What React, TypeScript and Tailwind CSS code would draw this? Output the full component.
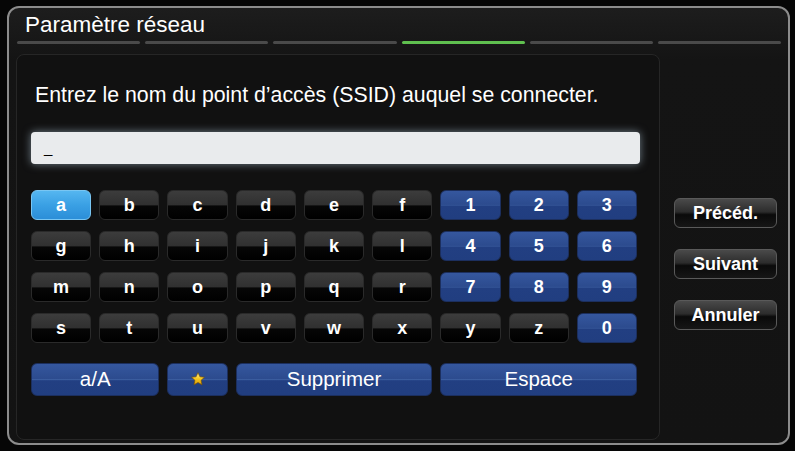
import React from "react";

const rows = [
  ["a", "b", "c", "d", "e", "f", "1", "2", "3"],
  ["g", "h", "i", "j", "k", "l", "4", "5", "6"],
  ["m", "n", "o", "p", "q", "r", "7", "8", "9"],
  ["s", "t", "u", "v", "w", "x", "y", "z", "0"],
];

const darkKey =
  "border border-[#2a2a2a] bg-[linear-gradient(to_bottom,#3c3c3c_0%,#303030_50%,#060606_53%,#000000_100%)]";
const blueKey =
  "border border-[#1c2f5e] bg-[linear-gradient(to_bottom,#35579e_0%,#2c4b8e_48%,#3a5c9e_50%,#223f82_54%,#213e80_100%)]";
const selKey =
  "border border-[#79c6f3] bg-[linear-gradient(to_bottom,#55b6f0_0%,#3aa0e4_50%,#2b8ed8_100%)]";

function Key({ label }: { label: string }) {
  const isDigit = /[0-9]/.test(label);
  const style = label === "a" ? selKey : isDigit ? blueKey : darkKey;
  return (
    <div
      className={`h-[30px] rounded-[6px] flex items-center justify-center text-white text-[18px] font-bold leading-none ${style}`}
    >
      {label}
    </div>
  );
}

function Star() {
  return (
    <svg width="16" height="16" viewBox="0 0 24 24">
      <defs>
        <linearGradient id="sg" x1="0" y1="0" x2="0" y2="1">
          <stop offset="0" stopColor="#fff4a0" />
          <stop offset="0.5" stopColor="#f6c81e" />
          <stop offset="1" stopColor="#d99a08" />
        </linearGradient>
      </defs>
      <path
        d="M12 2.5l2.9 6.2 6.7.7-5 4.6 1.4 6.7L12 17.3l-6 3.4 1.4-6.7-5-4.6 6.7-.7z"
        fill="url(#sg)"
        stroke="#7a5200"
        strokeWidth="1"
        strokeLinejoin="round"
      />
    </svg>
  );
}

function SideButton({ label }: { label: string }) {
  return (
    <div className="w-[103px] h-[30px] rounded-[6px] border border-[#5a5a5a] bg-[linear-gradient(to_bottom,#4a4a4a_0%,#2c2c2c_46%,#0a0a0a_56%,#161616_100%)] flex items-center justify-center text-white text-[18px] font-bold leading-none">
      {label}
    </div>
  );
}

export default function App() {
  const steps = [false, false, false, true, false, false];
  return (
    <div
      className="w-[795px] h-[451px] bg-[#060606] pt-[6px] pl-[7px] overflow-hidden"
      style={{ fontFamily: '"Liberation Sans", Arial, sans-serif' }}
    >
      <div className="w-[783px] h-[439px] rounded-[12px] border-2 border-[#8c8c8c] bg-[linear-gradient(to_bottom,#1d1d1d_0%,#141414_12%,#131313_100%)] flex flex-col">
        <div className="pl-[16px] pt-[4px] text-white text-[22.5px] leading-[25px]">
          Paramètre réseau
        </div>
        <div className="ml-[8px] mr-[7px] mt-[4px] flex gap-[5px]">
          {steps.map((on, i) => (
            <div
              key={i}
              className={`flex-1 h-[3px] rounded-full ${on ? "bg-[#5fbf4f]" : "bg-[#4a4a4a]"}`}
            />
          ))}
        </div>
        <div className="flex mt-[10px] ml-[7px]">
          <div className="w-[644px] h-[386px] rounded-[8px] border border-[#262626] bg-[#111111] px-[14px] pt-[28px]">
            <div className="ml-[4px] text-white text-[21.3px] leading-[25px]">
              Entrez le nom du point d’accès (SSID) auquel se connecter.
            </div>
            <div className="mt-[24px] w-[609px] h-[32px] rounded-[4px] bg-[#e9ebed] shadow-[0_0_9px_rgba(190,215,235,0.55)] flex items-end pl-[13px] pb-[9px] text-black text-[15px] leading-none">
              _
            </div>
            <div className="mt-[26px] w-[606px] grid grid-cols-9 gap-x-[8px] gap-y-[11px]">
              {rows.flat().map((k) => (
                <Key key={k} label={k} />
              ))}
            </div>
            <div className="mt-[20px] w-[606px] grid grid-cols-9 gap-x-[8px] h-[32px]">
              <div className={`col-span-2 rounded-[6px] flex items-center justify-center text-white text-[20.5px] ${blueKey}`}>
                a/A
              </div>
              <div className={`rounded-[6px] flex items-center justify-center ${blueKey}`}>
                <Star />
              </div>
              <div className={`col-span-3 rounded-[6px] flex items-center justify-center text-white text-[20.5px] ${blueKey}`}>
                Supprimer
              </div>
              <div className={`col-span-3 rounded-[6px] flex items-center justify-center text-white text-[20.5px] ${blueKey}`}>
                Espace
              </div>
            </div>
          </div>
          <div className="ml-[14px] pt-[144px] flex flex-col gap-[21px]">
            <SideButton label="Précéd." />
            <SideButton label="Suivant" />
            <SideButton label="Annuler" />
          </div>
        </div>
      </div>
    </div>
  );
}
